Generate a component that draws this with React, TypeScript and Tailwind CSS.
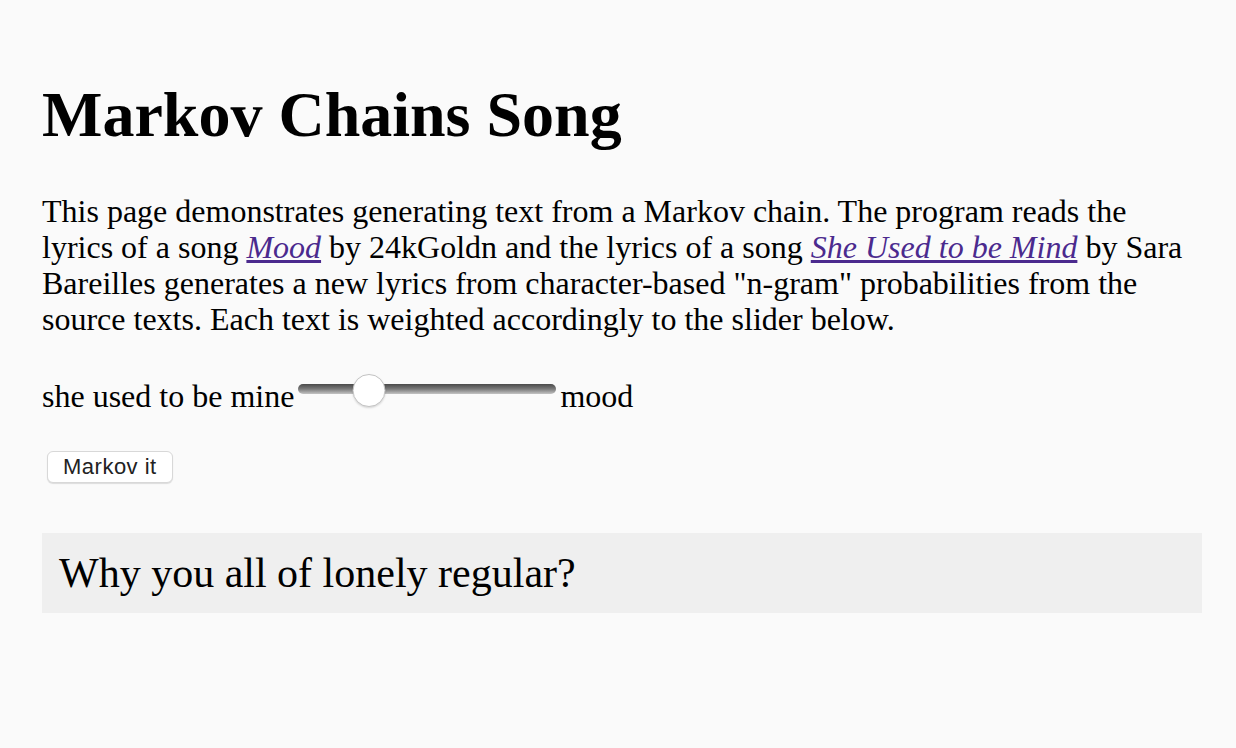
import { useState } from 'react';

export default function App() {
  const [weight, setWeight] = useState(24);

  return (
    <div className="min-h-[748px] bg-[#fafafa] pl-[42px] pr-[34px] pt-[78px] text-black font-['Liberation_Serif',serif]">
      <h1 className="text-[64px] font-bold leading-[1.15]">Markov Chains Song</h1>

      <p className="mt-[41px] text-[32px] leading-[36px]">
        This page demonstrates generating text from a Markov chain. The program reads the
        <br />
        lyrics of a song <a href="#" className="italic text-[#4b2a8e] underline">Mood</a> by 24kGoldn and the lyrics
        of a song <a href="#" className="italic text-[#4b2a8e] underline">She Used to be Mind</a> by Sara
        <br />
        Bareilles generates a new lyrics from character-based "n-gram" probabilities from the
        <br />
        source texts. Each text is weighted accordingly to the slider below.
      </p>

      <div className="mt-[41px] flex items-start text-[32px] leading-[36px]">
        <span>she used to be mine</span>
        <div className="relative mx-[4px] -mt-[4px] h-[33px] w-[258px]">
          <div className="absolute left-0 right-0 top-[10px] h-[10px] rounded-full bg-gradient-to-b from-[#4a4a4a] via-[#7a7a7a] to-[#c4c4c4]" />
          <input
            type="range"
            min={0}
            max={100}
            value={weight}
            onChange={(e) => setWeight(Number(e.target.value))}
            className="absolute inset-0 cursor-pointer opacity-0"
          />
          <div
            className="pointer-events-none absolute top-0 h-[33px] w-[33px] -translate-x-1/2 rounded-full border border-[#c4c4c4] bg-white shadow-[0_1px_2px_rgba(0,0,0,0.15)]"
            style={{ left: `${16.5 + (weight / 100) * 225}px` }}
          />
        </div>
        <span>mood</span>
      </div>

      <button className="mt-[37px] ml-[5px] h-[32px] rounded-[6px] border border-[#d8d8d8] bg-white px-[15px] text-[22px] leading-none tracking-[0.5px] font-['Liberation_Sans',sans-serif] text-[#222] shadow-[0_1px_1px_rgba(0,0,0,0.12)]">
        Markov it
      </button>

      <div className="mt-[50px] flex h-[80px] items-center bg-[#efefef] px-[17px]">
        <span className="text-[42px] leading-none">Why you all of lonely regular?</span>
      </div>
    </div>
  );
}
